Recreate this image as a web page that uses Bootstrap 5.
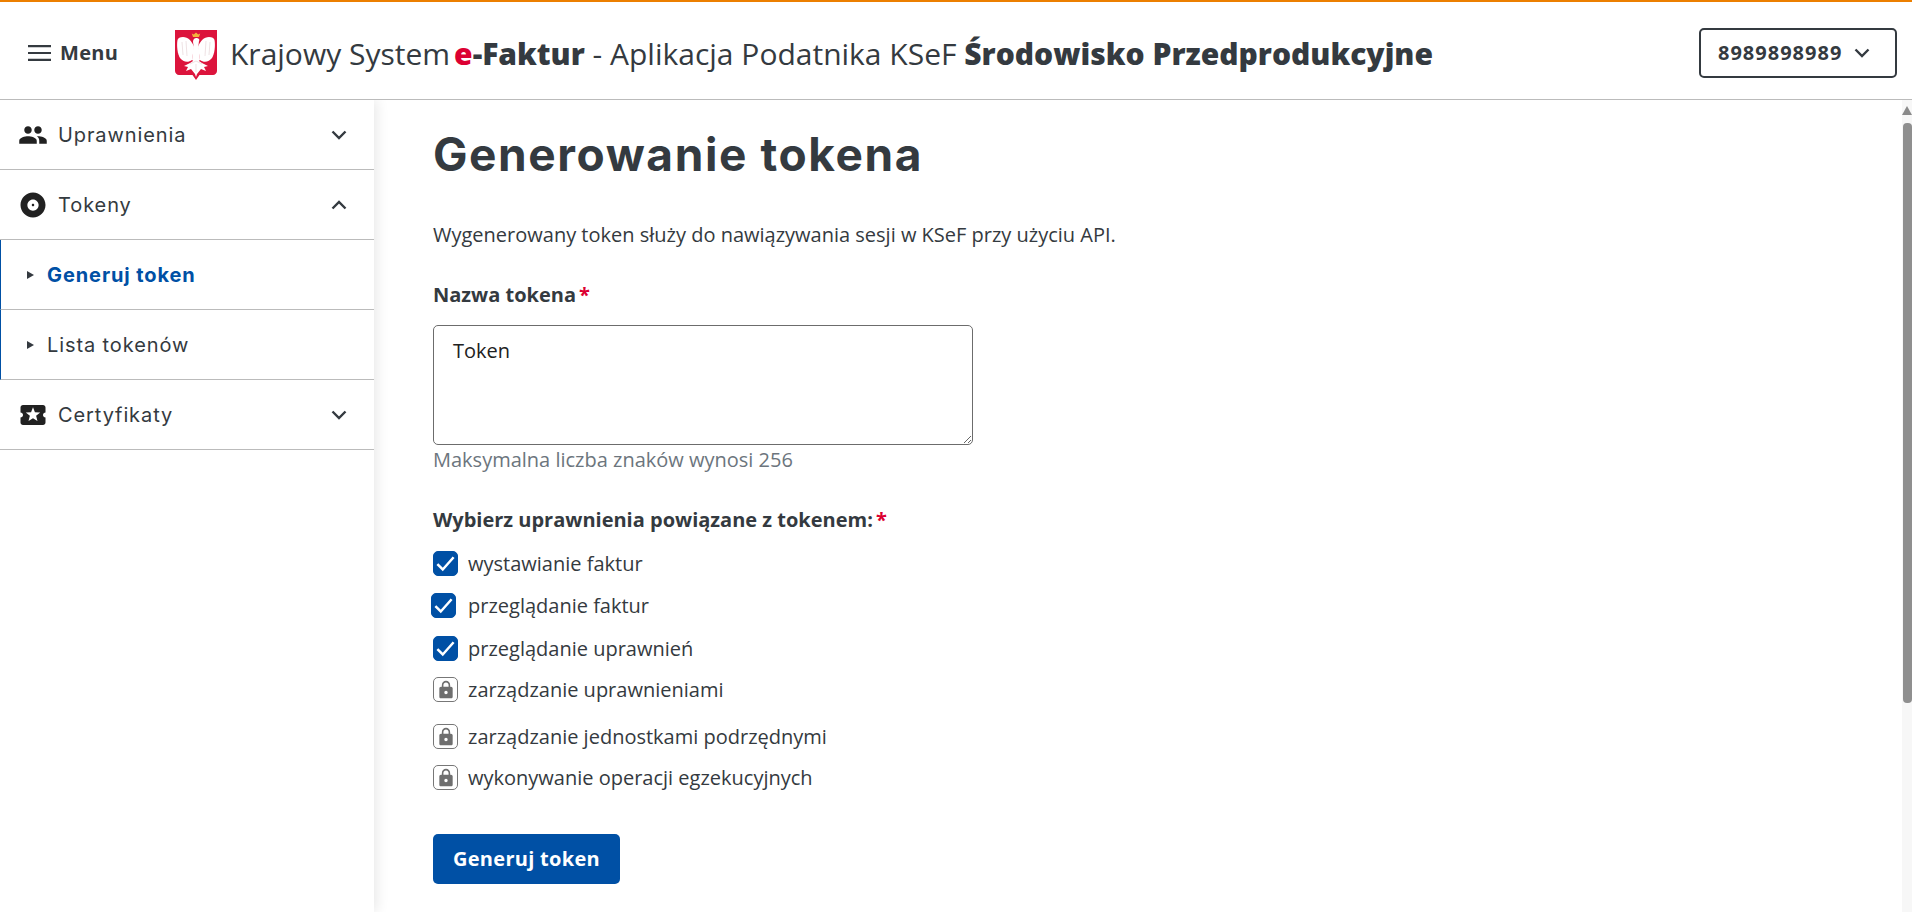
<!DOCTYPE html>
<html lang="pl">
<head>
<meta charset="utf-8">
<title>Generowanie tokena</title>
<link href="https://cdn.jsdelivr.net/npm/bootstrap@5.3.0/dist/css/bootstrap.min.css" rel="stylesheet">
<style>
html,body{height:100%}
body{font-family:"Open Sans","Liberation Sans",sans-serif;color:#343a40;overflow:hidden;border-top:2px solid #ec7f00;font-size:20px}
.app-head{height:98px;border-bottom:1px solid #bbb;padding:5px 15px 0 28px}
.menu-btn{font-weight:700;font-size:20px;color:#343a40;gap:9px;width:147px;letter-spacing:.3px}
.emblem{width:42px;height:50px;flex:none;margin:3px 13px 0 0}
.app-title{font-size:30px;white-space:nowrap;line-height:1.2;margin-top:2px}
.app-title b{font-weight:800}
.e-red{color:#dc0032;font-weight:800;margin-left:4px}
.acct-btn{width:198px;height:50px;border:2px solid #343a40;border-radius:5px;background:#fff;font-weight:700;font-size:20px;color:#343a40;letter-spacing:1px;padding:0 0 0 17px;gap:12px}
.side{width:374px;flex:none;box-shadow:3px 0 12px rgba(0,0,0,.09);z-index:1;position:relative}
.side-row{height:70px;border-bottom:1px solid #bbb;padding:0 27px 0 18px;font-family:Inter,"Liberation Sans",sans-serif;font-size:20px;letter-spacing:.9px;font-weight:400;color:#343a40}
.side-row svg.ico{width:30px;height:30px;fill:#212121;margin-right:10px;flex:none}
.side-sub{border-left:1px solid #0050a5;padding-left:26px;color:#343a40}
.side-sub .tri{width:0;height:0;border-left:7px solid #343a40;border-top:4px solid transparent;border-bottom:4px solid transparent;margin-right:14px}
.side-sub.on{color:#0050a5;font-weight:700}
.side-sub span:last-child{margin-left:-1px}
.chev{width:16px;height:10px;fill:none;stroke:#343a40;stroke-width:2.4}
.page{padding:0 0 0 59px;min-width:0}
.page-h{font-family:Inter,"Liberation Sans",sans-serif;font-weight:700;font-size:46px;letter-spacing:1.6px;line-height:55px;margin:27px 0 41px;color:#343a40}
.lead-txt{margin:0 0 36px;line-height:24px}
.lbl{font-weight:700;line-height:24px;margin:0 0 18px;display:block}
.req{color:#dc0032;margin-left:3px}
.area{width:540px;height:120px;border:1px solid #6c6c6c;border-radius:5px;padding:13px 19px;font-size:20px;color:#212121;line-height:24px;box-shadow:none}
.hint{color:#6c757d;line-height:24px;margin:3px 0 36px}
.lbl.l2{margin-bottom:19px}
.perm{height:25px;gap:10px;margin:0 0 17px;line-height:25px}
.perm:nth-child(2){margin-left:-2px;margin-bottom:18px;gap:12px}
.perm:nth-child(3){margin-bottom:16px}
.perm:nth-child(4){margin-bottom:22px}
.perm:nth-child(5){margin-bottom:16px}
.perm .form-check-input{width:25px;height:25px;margin:0;border-radius:5px;background-color:#0050a5;border-color:#0050a5;flex:none;opacity:1;background-size:25px 25px;background-image:url("data:image/svg+xml,%3csvg xmlns='http://www.w3.org/2000/svg' viewBox='0 0 20 20'%3e%3cpath fill='none' stroke='%23fff' stroke-width='2' d='M3.500 10.500 7.800 14.800 16.500 5'/%3e%3c/svg%3e")}
.lockbox{width:25px;height:25px;border:1px solid #777;border-radius:5px;flex:none;background:#fff}
.lockbox svg{width:20px;height:20px;fill:#6f6f6f}
.go-btn{width:187px;height:50px;margin-top:27px;background:#0050a5;border:0;border-radius:5px;color:#fff;font-weight:700;font-size:20px;letter-spacing:.3px;padding:0}
.go-btn:hover{background:#0050a5;color:#fff}
.sbar{width:10px;flex:none;background:#f7f7f7;padding-top:6px}
.sbar-up{width:0;height:0;border-left:5px solid transparent;border-right:5px solid transparent;border-bottom:9px solid #8a8a8a}
.sbar-thumb{width:9px;height:580px;margin:8px 0 0 1px;background:#8f8f8f;border-radius:4px}
</style>
</head>
<body class="d-flex flex-column">
<header class="app-head d-flex align-items-center flex-none">
  <div class="menu-btn d-flex align-items-center">
    <svg width="23" height="16" viewBox="0 0 23 16"><path d="M0 1.200h23M0 8h23M0 14.800h23" stroke="#343a40" stroke-width="2.200"/></svg>
    <span>Menu</span>
  </div>
  <svg class="emblem" viewBox="0 0 42 50">
    <path d="M0 0h42v41c0 2-2 4-4 4H24.500L21 50l-3.500-5H4c-2 0-4-2-4-4z" fill="#dc143c"/>
    <path d="M18 7h6l1.200-3.500-2 1L21 2.500l-2.200 2-2-1z" fill="#f2b53c"/>
    <g fill="#fff">
      <path id="wl" d="M19 17C17 11 13 7 8 7 5 7 3 8 2.500 10c-1 6 0 14 2.500 18 3 4 8 5 12 2z"/>
      <path d="M23 17c2-6 6-10 11-10 3 0 5 1 5.500 3 1 6 0 14-2.500 18-3 4-8 5-12 2z"/>
      <path d="M18 12c0-3 2-4.500 4-4 2 .5 3 2 2 3l-.5 4 1.500 15-4 3-4-3 1.500-15z"/>
      <path d="M21 29l6 4 6 3-4 1 2 4-5-2-4 5-1 3-1-3-4-5-5 2 2-4-4-1 6-3z"/>
    </g>
    <path d="M7 12l1 13M11 11l1 15M35 12l-1 13M31 11l-1 15M15 34l6-3 6 3M21 34v8" stroke="#e6d5d8" stroke-width=".7" fill="none"/>
  </svg>
  <div class="app-title">Krajowy System<span class="e-red">e</span><b>-Faktur</b> - Aplikacja Podatnika KSeF <b>Środowisko Przedprodukcyjne</b></div>
  <button class="acct-btn d-flex align-items-center ms-auto" type="button">
    <span>8989898989</span>
    <svg class="chev" viewBox="0 0 16 10"><path d="M1.500 1.500 8 8l6.500-6.500"/></svg>
  </button>
</header>
<div class="d-flex flex-grow-1 overflow-hidden">
  <nav class="side">
    <div class="side-row d-flex align-items-center">
      <svg class="ico" viewBox="0 0 24 24"><path d="M16 11c1.660 0 2.990-1.340 2.990-3S17.660 5 16 5c-1.660 0-3 1.340-3 3s1.340 3 3 3zm-8 0c1.660 0 2.990-1.340 2.990-3S9.660 5 8 5C6.340 5 5 6.340 5 8s1.340 3 3 3zm0 2c-2.330 0-7 1.170-7 3.500V19h14v-2.500c0-2.330-4.670-3.500-7-3.500zm8 0c-.29 0-.62.020-.97.050 1.160.840 1.970 1.970 1.970 3.450V19h6v-2.500c0-2.330-4.670-3.500-7-3.500z"/></svg>
      <span>Uprawnienia</span>
      <svg class="chev ms-auto" viewBox="0 0 16 10"><path d="M1.500 1.500 8 8l6.500-6.500"/></svg>
    </div>
    <div class="side-row d-flex align-items-center">
      <svg class="ico" viewBox="0 0 24 24"><path d="M12 2C6.480 2 2 6.480 2 12s4.480 10 10 10 10-4.480 10-10S17.520 2 12 2zm0 14.500c-2.490 0-4.500-2.010-4.500-4.500S9.510 7.500 12 7.500s4.500 2.010 4.500 4.500-2.010 4.500-4.500 4.500zm0-5.500c-.55 0-1 .45-1 1s.45 1 1 1 1-.45 1-1-.45-1-1-1z"/></svg>
      <span>Tokeny</span>
      <svg class="chev ms-auto" viewBox="0 0 16 10"><path d="M1.500 8.500 8 2l6.500 6.500"/></svg>
    </div>
    <div class="side-row side-sub on d-flex align-items-center"><span class="tri"></span><span>Generuj token</span></div>
    <div class="side-row side-sub d-flex align-items-center"><span class="tri"></span><span>Lista tokenów</span></div>
    <div class="side-row d-flex align-items-center">
      <svg class="ico" viewBox="0 0 24 24"><path d="M20 12c0-1.100.9-2 2-2V6c0-1.100-.9-2-2-2H4c-1.100 0-1.990.9-1.990 2v4c1.100 0 1.990.9 1.990 2s-.89 2-2 2v4c0 1.100.9 2 2 2h16c1.100 0 2-.9 2-2v-4c-1.100 0-2-.9-2-2zm-4.420 4.800L12 14.500l-3.580 2.300 1.080-4.120-3.290-2.690 4.240-.25L12 5.800l1.540 3.950 4.240.25-3.290 2.690 1.090 4.110z"/></svg>
      <span>Certyfikaty</span>
      <svg class="chev ms-auto" viewBox="0 0 16 10"><path d="M1.500 1.500 8 8l6.500-6.500"/></svg>
    </div>
  </nav>
  <main class="page flex-grow-1">
    <h1 class="page-h">Generowanie tokena</h1>
    <p class="lead-txt">Wygenerowany token służy do nawiązywania sesji w KSeF przy użyciu API.</p>
    <label class="lbl" for="tk">Nazwa tokena<span class="req">*</span></label>
    <textarea id="tk" class="area form-control">Token</textarea>
    <div class="hint">Maksymalna liczba znaków wynosi 256</div>
    <div class="lbl l2">Wybierz uprawnienia powiązane z tokenem:<span class="req">*</span></div>
    <div>
      <div class="perm d-flex align-items-center"><input class="form-check-input" type="checkbox" checked aria-label="wystawianie faktur"><span>wystawianie faktur</span></div>
      <div class="perm d-flex align-items-center"><input class="form-check-input" type="checkbox" checked aria-label="przeglądanie faktur"><span>przeglądanie faktur</span></div>
      <div class="perm d-flex align-items-center"><input class="form-check-input" type="checkbox" checked aria-label="przeglądanie uprawnień"><span>przeglądanie uprawnień</span></div>
      <div class="perm d-flex align-items-center"><span class="lockbox d-flex align-items-center justify-content-center"><svg viewBox="0 0 24 24"><path d="M18 8h-1V6c0-2.760-2.240-5-5-5S7 3.240 7 6v2H6c-1.100 0-2 .9-2 2v10c0 1.100.9 2 2 2h12c1.100 0 2-.9 2-2V10c0-1.100-.9-2-2-2zm-6 9c-1.100 0-2-.9-2-2s.9-2 2-2 2 .9 2 2-.9 2-2 2zm3.100-9H8.900V6c0-1.710 1.390-3.100 3.100-3.100 1.710 0 3.100 1.390 3.100 3.100v2z"/></svg></span><span>zarządzanie uprawnieniami</span></div>
      <div class="perm d-flex align-items-center"><span class="lockbox d-flex align-items-center justify-content-center"><svg viewBox="0 0 24 24"><path d="M18 8h-1V6c0-2.760-2.240-5-5-5S7 3.240 7 6v2H6c-1.100 0-2 .9-2 2v10c0 1.100.9 2 2 2h12c1.100 0 2-.9 2-2V10c0-1.100-.9-2-2-2zm-6 9c-1.100 0-2-.9-2-2s.9-2 2-2 2 .9 2 2-.9 2-2 2zm3.100-9H8.900V6c0-1.710 1.390-3.100 3.100-3.100 1.710 0 3.100 1.390 3.100 3.100v2z"/></svg></span><span>zarządzanie jednostkami podrzędnymi</span></div>
      <div class="perm d-flex align-items-center"><span class="lockbox d-flex align-items-center justify-content-center"><svg viewBox="0 0 24 24"><path d="M18 8h-1V6c0-2.760-2.240-5-5-5S7 3.240 7 6v2H6c-1.100 0-2 .9-2 2v10c0 1.100.9 2 2 2h12c1.100 0 2-.9 2-2V10c0-1.100-.9-2-2-2zm-6 9c-1.100 0-2-.9-2-2s.9-2 2-2 2 .9 2 2-.9 2-2 2zm3.100-9H8.900V6c0-1.710 1.390-3.100 3.100-3.100 1.710 0 3.100 1.390 3.100 3.100v2z"/></svg></span><span>wykonywanie operacji egzekucyjnych</span></div>
    </div>
    <button class="btn go-btn" type="button">Generuj token</button>
  </main>
  <div class="sbar" aria-hidden="true"><div class="sbar-up"></div><div class="sbar-thumb"></div></div>
</div>
<script src="https://cdn.jsdelivr.net/npm/bootstrap@5.3.0/dist/js/bootstrap.bundle.min.js"></script>
</body>
</html>
